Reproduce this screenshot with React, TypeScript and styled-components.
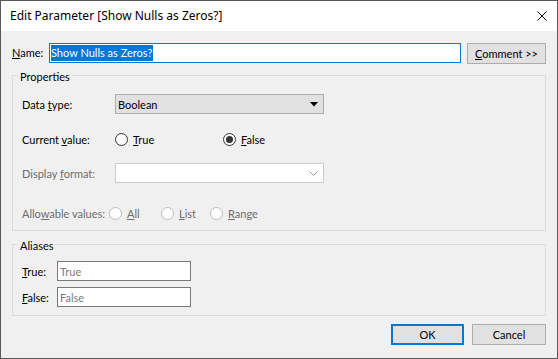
import React from 'react'
import styled, { createGlobalStyle } from 'styled-components'

const GlobalStyle = createGlobalStyle`
    html, body {
        margin: 0;
        padding: 0;
        background: #ffffff;
    }

    body {
        font-family: "Segoe UI", Lato, "Noto Sans", sans-serif;
        font-size: 11px;
        color: #000000;
    }

    * {
        box-sizing: border-box;
    }
`

const Window = styled.div`
    width: 558px;
    height: 359px;
    border: 1px solid #595959;
    background: #f0f0f0;
    display: flex;
    flex-direction: column;
`

const TitleBar = styled.div`
    height: 30px;
    flex-shrink: 0;
    background: #ffffff;
    display: flex;
    align-items: center;
    justify-content: space-between;
    padding: 0 10px 0 9px;
`

const Title = styled.span`
    font-family: "Segoe UI", "Noto Sans", sans-serif;
    font-size: 12px;
    line-height: 16px;
`

const Body = styled.div`
    flex: 1;
    display: flex;
    flex-direction: column;
    padding: 12px 11px 0 11px;
`

const NameRow = styled.div`
    display: flex;
    align-items: flex-start;
    height: 21px;
`

const NameLabel = styled.label`
    width: 37px;
    line-height: 20px;
`

const NameInput = styled.div`
    width: 412px;
    height: 20px;
    border: 1px solid #0078d7;
    background: #ffffff;
    padding: 1px 1px;
    display: flex;
    align-items: center;
    margin-right: 6px;
`

const Selected = styled.span`
    background: #0078d7;
    color: #ffffff;
    line-height: 16px;
    padding-right: 1px;
`

const Button = styled.button<{ $default?: boolean; $width: number }>`
    width: ${(p) => p.$width}px;
    height: 21px;
    margin: 0;
    padding: 0;
    font: inherit;
    color: #000000;
    background: #e1e1e1;
    border: ${(p) => (p.$default ? '2px solid #0078d7' : '1px solid #adadad')};
`

const Group = styled.fieldset<{ $top: number; $padTop: number; $padBottom: number }>`
    margin: ${(p) => p.$top}px 0 0 0;
    padding: ${(p) => p.$padTop}px 9px ${(p) => p.$padBottom}px 9px;
    border: 1px solid #dcdcdc;
    min-width: 0;

    legend {
        margin-left: -4px;
        padding: 4px 2px 0 2px;
        line-height: 14px;
    }
`

const Row = styled.div<{ $top?: number }>`
    display: flex;
    align-items: center;
    height: 20px;
    margin-top: ${(p) => p.$top || 0}px;
`

const Label = styled.span<{ $width?: number; $disabled?: boolean }>`
    width: ${(p) => (p.$width ? `${p.$width}px` : 'auto')};
    flex-shrink: 0;
    white-space: nowrap;
    color: ${(p) => (p.$disabled ? '#6d6d6d' : '#000000')};
`

const Combo = styled.div<{ $disabled?: boolean }>`
    width: 209px;
    height: 20px;
    border: 1px solid ${(p) => (p.$disabled ? '#cccccc' : '#adadad')};
    background: ${(p) => (p.$disabled ? '#ffffff' : '#e1e1e1')};
    display: flex;
    align-items: center;
    justify-content: space-between;
    padding: 0 5px 0 2px;
`

const RadioOption = styled.div<{ $width?: number; $disabled?: boolean }>`
    display: flex;
    align-items: center;
    gap: 5px;
    width: ${(p) => (p.$width ? `${p.$width}px` : 'auto')};
    color: ${(p) => (p.$disabled ? '#6d6d6d' : '#000000')};
`

const RadioCircle = styled.span<{ $checked?: boolean; $disabled?: boolean }>`
    width: 13px;
    height: 13px;
    border-radius: 50%;
    border: 1px solid ${(p) => (p.$disabled ? '#bcbcbc' : '#333333')};
    background: #ffffff;
    display: flex;
    align-items: center;
    justify-content: center;
    flex-shrink: 0;

    &::after {
        content: '';
        width: 7px;
        height: 7px;
        border-radius: 50%;
        background: #333333;
        display: ${(p) => (p.$checked ? 'block' : 'none')};
    }
`

const AllowableLabel = styled(Label)`
    margin-right: 4px;
`

const AliasRow = styled.div<{ $top?: number }>`
    display: flex;
    align-items: center;
    height: 20px;
    margin-top: ${(p) => p.$top || 0}px;
`

const AliasInput = styled.div`
    width: 134px;
    height: 20px;
    border: 1px solid #7a7a7a;
    background: #ffffff;
    color: #7a7a7a;
    padding: 0 2px;
    display: flex;
    align-items: center;
`

const ButtonRow = styled.div`
    display: flex;
    justify-content: flex-end;
    gap: 8px;
    margin-top: 8px;
`

const Radio: React.FC<{ label: React.ReactNode; checked?: boolean; disabled?: boolean; width?: number }> = ({ label, checked, disabled, width }) => (
    <RadioOption $width={width} $disabled={disabled}>
        <RadioCircle $checked={checked} $disabled={disabled} />
        <span>{label}</span>
    </RadioOption>
)

const App: React.FC = () => {
    return (
        <>
            <GlobalStyle />
            <Window>
                <TitleBar>
                    <Title>Edit Parameter [Show Nulls as Zeros?]</Title>
                    <svg width="10" height="10" viewBox="0 0 10 10">
                        <path d="M0.5 0.5 L9.5 9.5 M9.5 0.5 L0.5 9.5" stroke="#000" strokeWidth="1" />
                    </svg>
                </TitleBar>

                <Body>
                    <NameRow>
                        <NameLabel><u>N</u>ame:</NameLabel>
                        <NameInput>
                            <Selected>Show Nulls as Zeros?</Selected>
                        </NameInput>
                        <Button $width={79}><u>C</u>omment &gt;&gt;</Button>
                    </NameRow>

                    <Group $top={2} $padTop={10} $padBottom={7}>
                        <legend>Properties</legend>
                        <Row>
                            <Label $width={93}>Data <u>t</u>ype:</Label>
                            <Combo>
                                <span>Boolean</span>
                                <svg width="8" height="5" viewBox="0 0 8 5">
                                    <path d="M0 0 H8 L4 4.5 Z" fill="#000" />
                                </svg>
                            </Combo>
                        </Row>
                        <Row $top={15}>
                            <Label $width={93}>Current <u>v</u>alue:</Label>
                            <Radio width={108} label={<><u>T</u>rue</>} />
                            <Radio checked label={<><u>F</u>alse</>} />
                        </Row>
                        <Row $top={14}>
                            <Label $width={93} $disabled>Display <u>f</u>ormat:</Label>
                            <Combo $disabled>
                                <span />
                                <svg width="9" height="5" viewBox="0 0 9 5">
                                    <path d="M0.5 0.5 L4.5 4.5 L8.5 0.5" stroke="#a0a0a0" strokeWidth="1" fill="none" />
                                </svg>
                            </Combo>
                        </Row>
                        <Row $top={20}>
                            <AllowableLabel $disabled>Allo<u>w</u>able values:</AllowableLabel>
                            <Radio disabled width={52} label={<><u>A</u>ll</>} />
                            <Radio disabled width={49} label={<><u>L</u>ist</>} />
                            <Radio disabled label={<><u>R</u>ange</>} />
                        </Row>
                    </Group>

                    <Group $top={4} $padTop={8} $padBottom={8}>
                        <legend>Aliases</legend>
                        <AliasRow>
                            <Label $width={35}><u>T</u>rue:</Label>
                            <AliasInput>True</AliasInput>
                        </AliasRow>
                        <AliasRow $top={6}>
                            <Label $width={35}><u>F</u>alse:</Label>
                            <AliasInput>False</AliasInput>
                        </AliasRow>
                    </Group>

                    <ButtonRow>
                        <Button $default $width={73}>OK</Button>
                        <Button $width={74}>Cancel</Button>
                    </ButtonRow>
                </Body>
            </Window>
        </>
    )
}

export default App
